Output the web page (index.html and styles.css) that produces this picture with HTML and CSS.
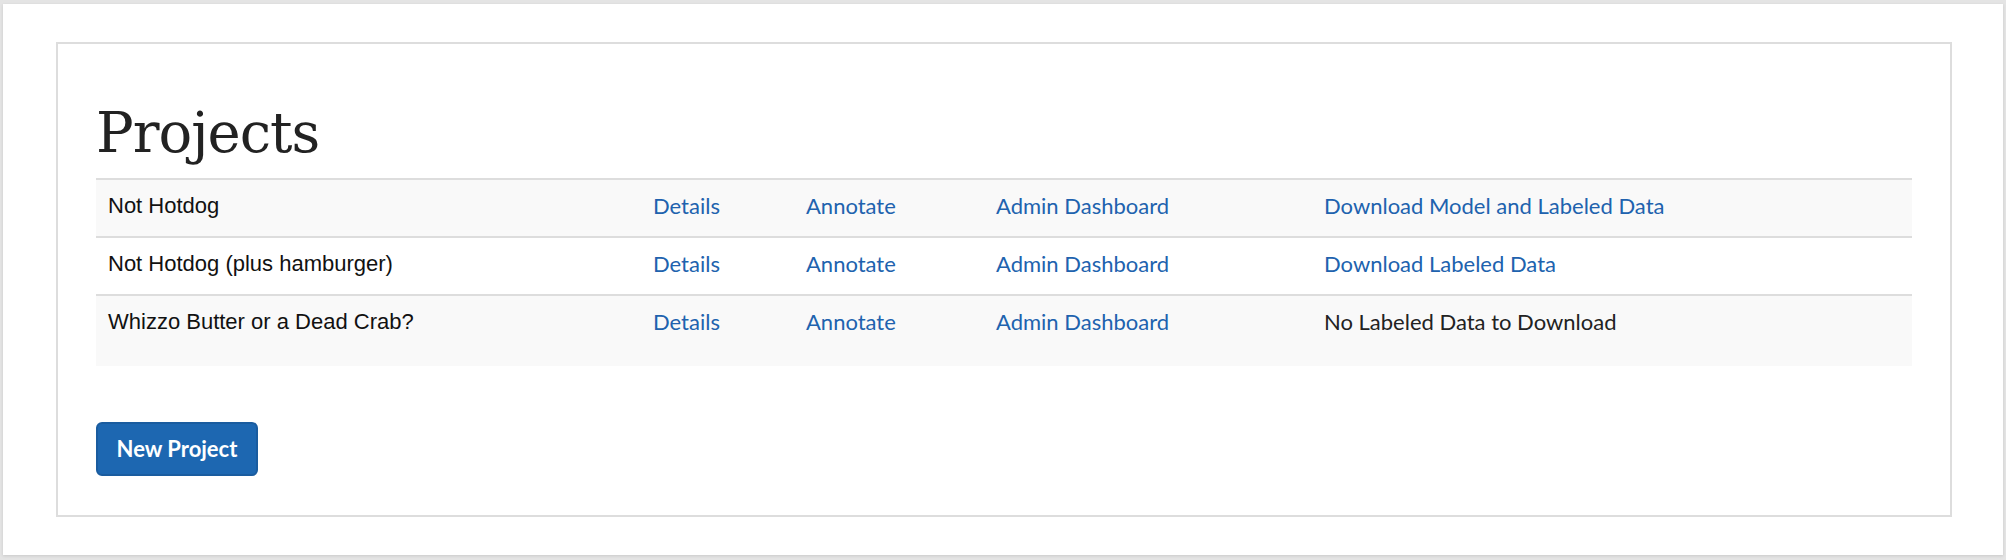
FILE: index.html
```html
<!DOCTYPE html>
<html lang="en">
<head>
<meta charset="utf-8">
<title>Projects</title>
<link rel="stylesheet" href="styles.css">
</head>
<body>
<div class="window">
  <div class="card">
    <h1 class="title">Projects</h1>
    <table class="projects">
      <colgroup>
        <col class="c-name">
        <col class="c-details">
        <col class="c-annotate">
        <col class="c-admin">
        <col class="c-download">
      </colgroup>
      <tbody>
        <tr class="striped">
          <td class="name">Not Hotdog</td>
          <td><a href="#">Details</a></td>
          <td><a href="#">Annotate</a></td>
          <td><a href="#">Admin Dashboard</a></td>
          <td><a href="#">Download Model and Labeled Data</a></td>
        </tr>
        <tr>
          <td class="name">Not Hotdog (plus hamburger)</td>
          <td><a href="#">Details</a></td>
          <td><a href="#">Annotate</a></td>
          <td><a href="#">Admin Dashboard</a></td>
          <td><a href="#">Download Labeled Data</a></td>
        </tr>
        <tr class="striped last">
          <td class="name">Whizzo Butter or a Dead Crab?</td>
          <td><a href="#">Details</a></td>
          <td><a href="#">Annotate</a></td>
          <td><a href="#">Admin Dashboard</a></td>
          <td>No Labeled Data to Download</td>
        </tr>
      </tbody>
    </table>
    <button class="btn-primary" type="button">New Project</button>
  </div>
</div>
</body>
</html>
```

FILE: styles.css
```css
html, body {
  margin: 0;
  padding: 0;
}

body {
  background: #e4e4e4;
  padding: 4px 3px 5px 3px;
  font-family: Lato, "Liberation Sans", sans-serif;
  font-size: 22px;
  color: #222;
}

.window {
  background: #ffffff;
  height: 551px;
  box-sizing: border-box;
  padding: 38px 51px 0 53px;
  box-shadow: 0 1px 3px rgba(0, 0, 0, 0.12);
}

.card {
  border: 2px solid #dddddd;
  height: 475px;
  box-sizing: border-box;
  padding: 58px 38px 0 38px;
}

.title {
  margin: 0 0 14px 0;
  font-family: "DejaVu Serif", "Liberation Serif", serif;
  font-weight: normal;
  font-size: 56px;
  line-height: 62px;
  letter-spacing: -1px;
  color: #222;
}

.projects {
  width: 100%;
  border-collapse: collapse;
  table-layout: fixed;
  border-top: 2px solid #dddddd;
}

.c-name { width: 545px; }
.c-details { width: 153px; }
.c-annotate { width: 190px; }
.c-admin { width: 328px; }

.projects td {
  padding: 10px 12px 14px 12px;
  line-height: 32px;
  vertical-align: top;
  white-space: nowrap;
  border-top: 2px solid #dddddd;
}

.projects tr:first-child td {
  border-top: none;
}

.projects tr.striped td {
  background: #f9f9f9;
}

.projects tr.last td {
  padding-bottom: 28px;
}

.projects td.name {
  font-family: "Liberation Sans", Arial, sans-serif;
  color: #111;
}

.projects a {
  color: #2062ae;
  text-decoration: none;
}

.btn-primary {
  display: block;
  margin-top: 56px;
  width: 162px;
  height: 54px;
  padding: 0;
  font-family: Lato, sans-serif;
  font-weight: bold;
  font-size: 22px;
  line-height: 32px;
  color: #ffffff;
  background: #1d67b1;
  border: 2px solid #1a5c9f;
  border-radius: 6px;
}
```
